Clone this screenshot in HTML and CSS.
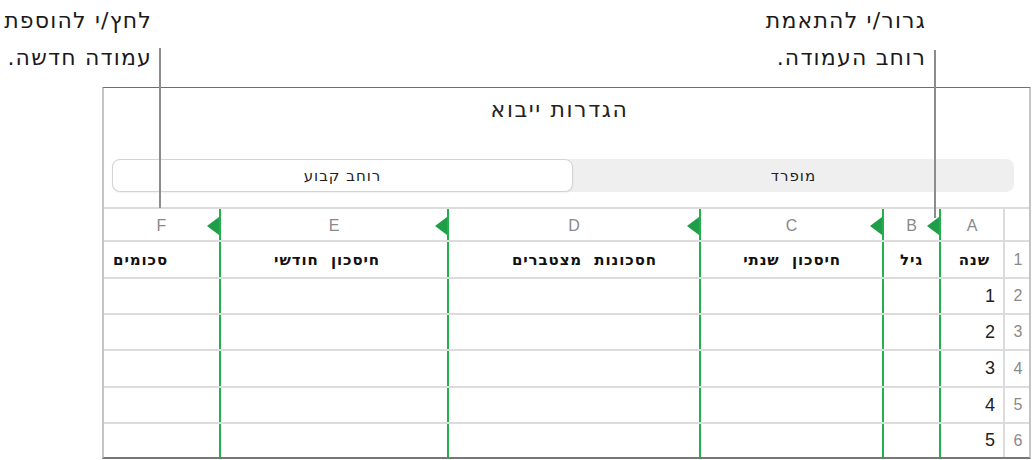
FILE: index.html
```html
<!DOCTYPE html>
<html lang="he" dir="rtl">
<head>
    <meta charset="UTF-8">
    <title>הגדרות ייבוא</title>
    <link rel="stylesheet" href="styles.css">
</head>
<body>

    <div class="page">
        <div class="notes">
            <div class="note note-drag">גרור/י להתאמת<br>רוחב העמודה.</div>
            <div class="note note-add">לחץ/י להוספת<br>עמודה חדשה.</div>
        </div>
        <span class="leader leader-drag"></span>
        <span class="leader leader-add"></span>

        <div class="panel">
            <h2 class="title">הגדרות ייבוא</h2>

            <div class="segments">
                <div class="seg">מופרד</div>
                <div class="seg seg-on">רוחב קבוע</div>
            </div>

            <div class="sheet">
                <div class="row row-letters">
                    <div class="cell num"></div>
                    <div class="cell col marker">A</div>
                    <div class="cell col marker">B</div>
                    <div class="cell col marker">C</div>
                    <div class="cell col marker">D</div>
                    <div class="cell col marker">E</div>
                    <div class="cell col">F</div>
                </div>
                <div class="row row-head">
                    <div class="cell num">1</div>
                    <div class="cell col h-a">שנה</div>
                    <div class="cell col h-b">גיל</div>
                    <div class="cell col h-c">חיסכון&nbsp; שנתי</div>
                    <div class="cell col h-d">חסכונות&nbsp; מצטברים</div>
                    <div class="cell col h-e">חיסכון&nbsp; חודשי</div>
                    <div class="cell col h-f">סכומים</div>
                </div>
                <div class="row">
                    <div class="cell num">2</div>
                    <div class="cell col val">1</div>
                    <div class="cell col"></div>
                    <div class="cell col"></div>
                    <div class="cell col"></div>
                    <div class="cell col"></div>
                    <div class="cell col"></div>
                </div>
                <div class="row">
                    <div class="cell num">3</div>
                    <div class="cell col val">2</div>
                    <div class="cell col"></div>
                    <div class="cell col"></div>
                    <div class="cell col"></div>
                    <div class="cell col"></div>
                    <div class="cell col"></div>
                </div>
                <div class="row row-tall">
                    <div class="cell num">4</div>
                    <div class="cell col val">3</div>
                    <div class="cell col"></div>
                    <div class="cell col"></div>
                    <div class="cell col"></div>
                    <div class="cell col"></div>
                    <div class="cell col"></div>
                </div>
                <div class="row">
                    <div class="cell num">5</div>
                    <div class="cell col val">4</div>
                    <div class="cell col"></div>
                    <div class="cell col"></div>
                    <div class="cell col"></div>
                    <div class="cell col"></div>
                    <div class="cell col"></div>
                </div>
                <div class="row row-last">
                    <div class="cell num">6</div>
                    <div class="cell col val">5</div>
                    <div class="cell col"></div>
                    <div class="cell col"></div>
                    <div class="cell col"></div>
                    <div class="cell col"></div>
                    <div class="cell col"></div>
                </div>
            </div>
        </div>
    </div>

</body>
</html>
```

FILE: styles.css
```css
body {
    margin: 0;
    background-color: #ffffff;
    color: #222;
    font-family: "DejaVu Sans", "Liberation Sans", sans-serif;
}
.page {
    position: relative;
    width: 1032px;
    height: 460px;
    overflow: hidden;
}
.notes {
    display: flex;
    height: 87px;
}
.note {
    padding-top: 2px;
    font-size: 22px;
    line-height: 37px;
    letter-spacing: 1.2px;
    color: #1a1a1a;
}
.note-drag {
    margin-right: 106px;
}
.note-add {
    margin-right: auto;
    margin-left: 5px;
    width: 147px;
    white-space: nowrap;
}
.leader {
    position: absolute;
    width: 2px;
    background-color: #8c8c8c;
}
.leader-add {
    left: 159px;
    top: 48px;
    height: 160px;
}
.leader-drag {
    left: 934px;
    top: 50px;
    height: 168px;
}
.panel {
    margin: 0 1px 0 102px;
    border-top: 1px solid #6e6e6e;
    border-left: 2px solid #c4c4c4;
    border-right: 2px solid #c4c4c4;
    border-bottom: 2px solid #777;
    padding-top: 10px;
}
.title {
    margin: 0;
    padding-right: 14px;
    font-size: 22px;
    font-weight: normal;
    line-height: 24px;
    letter-spacing: 1.6px;
    text-align: center;
    color: #222;
}
.segments {
    display: grid;
    grid-template-columns: 441px 1fr;
    height: 33px;
    margin: 37px 15px 0 8px;
    background-color: #efeff0;
    border-radius: 8px;
}
.seg {
    display: flex;
    align-items: center;
    justify-content: center;
    font-size: 15px;
    letter-spacing: 1px;
    color: #222;
}
.seg-on {
    background-color: #ffffff;
    border: 1px solid #d3d3d3;
    border-radius: 8px;
    box-shadow: 0 1px 2px rgba(0, 0, 0, 0.06);
}
.sheet {
    margin-top: 15px;
}
.row {
    display: grid;
    grid-template-columns: 26px 64px 57px 183px 252px 228px 1fr;
    height: 36px;
    border-top: 2px solid #dcdcdc;
    box-sizing: border-box;
}
.row-letters {
    height: 33px;
}
.row-head {
    height: 37px;
}
.row-tall {
    height: 37px;
}
.row-last {
    height: 35px;
}
.cell {
    position: relative;
    display: flex;
    align-items: center;
    box-sizing: border-box;
}
.num {
    justify-content: center;
    padding-left: 2px;
    font-family: "Liberation Sans", sans-serif;
    font-size: 16px;
    color: #8a8a8a;
    border-left: 2px solid #dcdcdc;
}
.col {
    border-left: 2px solid #22b04f;
}
.col:last-child {
    border-left: none;
}
.row-letters .col {
    justify-content: center;
    font-family: "Liberation Sans", sans-serif;
    font-size: 16px;
    color: #8a8a8a;
    padding-top: 2px;
}
.marker::after {
    content: "";
    position: absolute;
    left: -14px;
    top: 8px;
    border-top: 9px solid transparent;
    border-bottom: 9px solid transparent;
    border-right: 12px solid #1e9e49;
}
.row-head .col {
    font-size: 15px;
    font-weight: bold;
    letter-spacing: 0.9px;
    color: #111;
    white-space: nowrap;
}
.h-a { padding-right: 13px; }
.h-b { padding-right: 16px; }
.h-c { padding-right: 41px; }
.h-d { padding-right: 42px; }
.h-e { padding-right: 67px; }
.h-f { padding-right: 51px; }
.val {
    padding-right: 8px;
    font-family: "Liberation Sans", sans-serif;
    font-size: 18px;
    color: #222;
}
```
